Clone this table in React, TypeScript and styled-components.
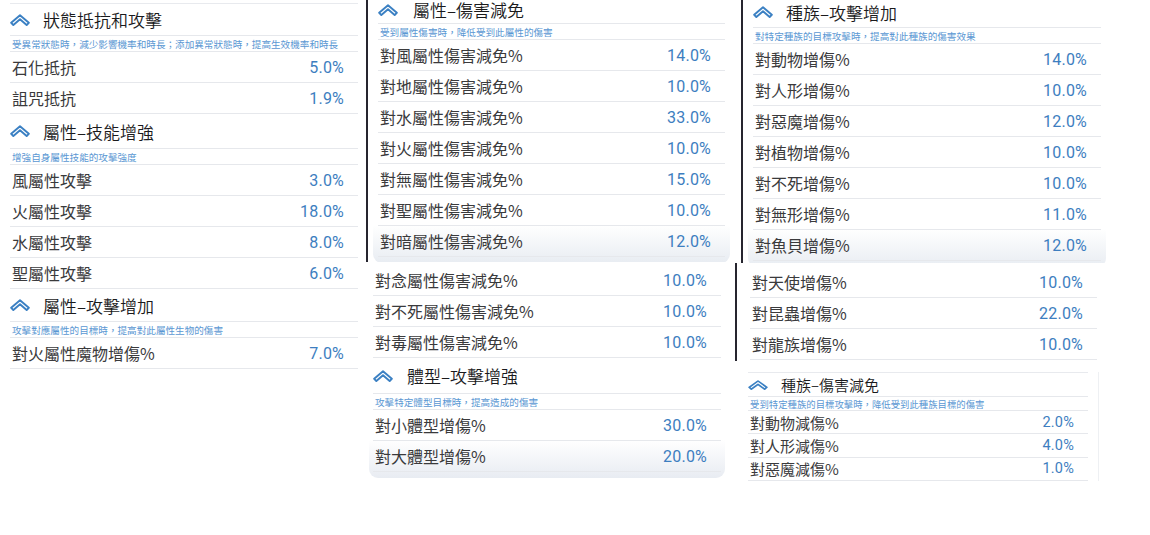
import React from "react";
import styled, { createGlobalStyle } from "styled-components";

const Global = createGlobalStyle`
  html, body { margin: 0; padding: 0; background: #ffffff; }
  body { font-family: "Noto Sans CJK TC", "Noto Sans", sans-serif; }
  * { box-sizing: border-box; }
`;

type Size = "lg" | "sm";
type Row = [string, string];

const Page = styled.div`
  width: 1150px;
  height: 535px;
  display: flex;
  align-items: flex-start;
  overflow: hidden;
  background: #fff;
`;

const Column = styled.div<{ $w: number }>`
  width: ${(p) => p.$w}px;
  flex: none;
  display: flex;
  flex-direction: column;
  align-items: flex-start;
`;

const Clip = styled.div<{
  $w: number;
  $h?: number;
  $ml?: number;
  $mt?: number;
  $pt?: number;
  $pl?: number;
  $edge?: boolean;
  $frame?: boolean;
}>`
  flex: none;
  width: ${(p) => p.$w}px;
  height: ${(p) => (p.$h ? `${p.$h}px` : "auto")};
  margin-left: ${(p) => p.$ml ?? 0}px;
  margin-top: ${(p) => p.$mt ?? 0}px;
  padding-top: ${(p) => p.$pt ?? 0}px;
  padding-left: ${(p) => p.$pl ?? 0}px;
  padding-right: ${(p) => (p.$frame ? 10 : 0)}px;
  overflow: hidden;
  border-left: ${(p) => (p.$edge ? "2px solid #26252f" : "none")};
  border-right: ${(p) => (p.$frame ? "1px solid #eef0f3" : "none")};
  background: #fff;
`;

const Card = styled.div<{ $shade?: boolean; $px: number; $shift?: number }>`
  margin-top: ${(p) => p.$shift ?? 0}px;
  padding: 0 ${(p) => p.$px}px ${(p) => (p.$shade ? 6 : 0)}px;
  border-radius: 0 0 9px 9px;
  background: ${(p) =>
    p.$shade
      ? "linear-gradient(180deg, #ffffff 0, #ffffff calc(100% - 38px), #e8ecf2 100%)"
      : "#ffffff"};
`;

const Header = styled.div<{ $h: number; $gap: number; $size: Size; $rule?: boolean }>`
  height: ${(p) => p.$h}px;
  display: flex;
  align-items: center;
  gap: ${(p) => p.$gap}px;
  border-top: ${(p) => (p.$rule ? "1px solid #e8eaee" : "none")};
  border-bottom: 1px solid #e6e8ec;
  font-size: ${(p) => (p.$size === "lg" ? 17 : 15)}px;
  font-weight: 350;
  color: #1a1a1c;
  white-space: nowrap;
`;

const Desc = styled.div<{ $size: Size }>`
  height: ${(p) => (p.$size === "lg" ? 16 : 14)}px;
  display: flex;
  align-items: center;
  padding-left: 2px;
  border-bottom: 1px solid #e6e8ec;
  font-size: ${(p) => (p.$size === "lg" ? 9.6 : 9.4)}px;
  color: #5a97d3;
  white-space: nowrap;
  overflow: hidden;
`;

const RowLine = styled.div<{ $size: Size }>`
  height: ${(p) => (p.$size === "lg" ? 31 : 23.3)}px;
  display: flex;
  align-items: center;
  justify-content: space-between;
  padding: 0 14px 0 2px;
  border-bottom: 1px solid #e6e8ec;
  white-space: nowrap;
`;

const Label = styled.span<{ $size: Size }>`
  font-size: ${(p) => (p.$size === "lg" ? 16 : 15)}px;
  color: #3a3a3c;
`;

const Value = styled.span<{ $size: Size }>`
  font-family: Roboto, "Liberation Sans", sans-serif;
  font-size: ${(p) => (p.$size === "lg" ? 16 : 14.5)}px;
  color: #3d7ec0;
  letter-spacing: 0.2px;
`;

const Chevron = ({ w, h }: { w: number; h: number }) => (
  <svg width={w} height={h} viewBox="0 0 22 13" preserveAspectRatio="none" aria-hidden>
    <path
      d="M11 1.3 L1.3 9.5 L3.7 12 L11 5.8 L18.3 12 L20.7 9.5 Z"
      fill="none"
      stroke="#3b80c3"
      strokeWidth="2.1"
      strokeLinejoin="round"
    />
  </svg>
);

type SectionProps = {
  title?: string;
  desc?: string;
  rows: Row[];
  size?: Size;
  headerH?: number;
  gap?: number;
  rule?: boolean;
};

const Section = ({ title, desc, rows, size = "lg", headerH = 31, gap = 15, rule }: SectionProps) => (
  <>
    {title && (
      <Header $h={headerH} $gap={gap} $size={size} $rule={rule}>
        {size === "lg" ? <Chevron w={20} h={12} /> : <Chevron w={20} h={10} />}
        <span>{title}</span>
      </Header>
    )}
    {desc && <Desc $size={size}>{desc}</Desc>}
    {rows.map(([k, v]) => (
      <RowLine key={k} $size={size}>
        <Label $size={size}>{k}</Label>
        <Value $size={size}>{v}</Value>
      </RowLine>
    ))}
  </>
);

export default function App() {
  return (
    <>
      <Global />
      <Page>
        <Column $w={364}>
          <Clip $w={358} $pl={10} $pt={3}>
            <Section
              rule
              headerH={33}
              gap={13}
              title="狀態抵抗和攻擊"
              desc="受異常狀態時，減少影響機率和時長；添加異常狀態時，提高生效機率和時長"
              rows={[
                ["石化抵抗", "5.0%"],
                ["詛咒抵抗", "1.9%"],
              ]}
            />
            <Section
              headerH={35}
              gap={13}
              title="屬性–技能增強"
              desc="增強自身屬性技能的攻擊強度"
              rows={[
                ["風屬性攻擊", "3.0%"],
                ["火屬性攻擊", "18.0%"],
                ["水屬性攻擊", "8.0%"],
                ["聖屬性攻擊", "6.0%"],
              ]}
            />
            <Section
              headerH={33}
              gap={13}
              title="屬性–攻擊增加"
              desc="攻擊對應屬性的目標時，提高對此屬性生物的傷害"
              rows={[["對火屬性魔物增傷%", "7.0%"]]}
            />
          </Clip>
        </Column>

        <Column $w={371}>
          <Clip $w={364} $h={262} $ml={2} $pl={5} $edge>
            <Card $px={5} $shade $shift={-4}>
              <Section
                headerH={28}
                gap={15}
                title="屬性–傷害減免"
                desc="受到屬性傷害時，降低受到此屬性的傷害"
                rows={[
                  ["對風屬性傷害減免%", "14.0%"],
                  ["對地屬性傷害減免%", "10.0%"],
                  ["對水屬性傷害減免%", "33.0%"],
                  ["對火屬性傷害減免%", "10.0%"],
                  ["對無屬性傷害減免%", "15.0%"],
                  ["對聖屬性傷害減免%", "10.0%"],
                  ["對暗屬性傷害減免%", "12.0%"],
                ]}
              />
            </Card>
          </Clip>
          <Clip $w={356} $ml={5} $pt={3}>
            <Card $px={4} $shade>
              <Section
                rows={[
                  ["對念屬性傷害減免%", "10.0%"],
                  ["對不死屬性傷害減免%", "10.0%"],
                  ["對毒屬性傷害減免%", "10.0%"],
                ]}
              />
              <Section
                headerH={36}
                gap={14}
                title="體型–攻擊增強"
                desc="攻擊特定體型目標時，提高造成的傷害"
                rows={[
                  ["對小體型增傷%", "30.0%"],
                  ["對大體型增傷%", "20.0%"],
                ]}
              />
            </Card>
          </Clip>
        </Column>

        <Column $w={415}>
          <Clip $w={365} $h={263} $ml={6} $pl={5} $edge>
            <Card $px={5} $shade $shift={-3}>
              <Section
                gap={13}
                title="種族–攻擊增加"
                desc="對特定種族的目標攻擊時，提高對此種族的傷害效果"
                rows={[
                  ["對動物增傷%", "14.0%"],
                  ["對人形增傷%", "10.0%"],
                  ["對惡魔增傷%", "12.0%"],
                  ["對植物增傷%", "10.0%"],
                  ["對不死增傷%", "10.0%"],
                  ["對無形增傷%", "11.0%"],
                  ["對魚貝增傷%", "12.0%"],
                ]}
              />
            </Card>
          </Clip>
          <Clip $w={362} $h={98} $pl={13} $pt={4} $edge>
            <Section
              rows={[
                ["對天使增傷%", "10.0%"],
                ["對昆蟲增傷%", "22.0%"],
                ["對龍族增傷%", "10.0%"],
              ]}
            />
          </Clip>
          <Clip $w={351} $ml={13} $mt={11} $frame>
            <Section
              size="sm"
              rule
              headerH={25}
              gap={13}
              title="種族–傷害減免"
              desc="受到特定種族的目標攻擊時，降低受到此種族目標的傷害"
              rows={[
                ["對動物減傷%", "2.0%"],
                ["對人形減傷%", "4.0%"],
                ["對惡魔減傷%", "1.0%"],
              ]}
            />
          </Clip>
        </Column>
      </Page>
    </>
  );
}
